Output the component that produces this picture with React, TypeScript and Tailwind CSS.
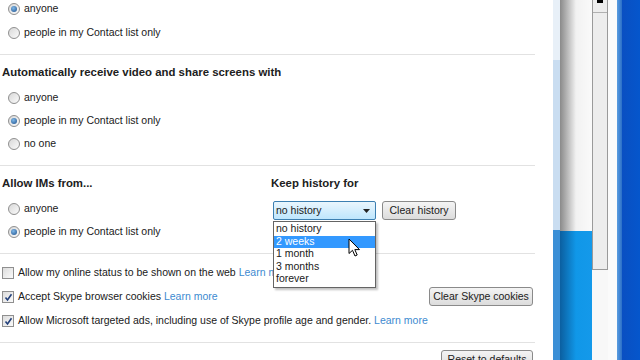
import React from 'react';

const font = { fontFamily: '"Liberation Sans", Arial, sans-serif' };

function Radio({ checked }: { checked?: boolean }) {
  return (
    <span className="relative inline-flex h-[12px] w-[12px] shrink-0 items-center justify-center rounded-full border border-[#8f8f8f] bg-gradient-to-br from-[#d8d8d8] to-[#fbfbfb]">
      {checked && <span className="h-[6px] w-[6px] rounded-full bg-[radial-gradient(circle_at_40%_35%,#7fb8e8,#1c4f8c)]" />}
    </span>
  );
}

function Check({ checked }: { checked?: boolean }) {
  return (
    <span className="inline-flex h-[12px] w-[12px] shrink-0 items-center justify-center border border-[#8f8f8f] bg-gradient-to-br from-[#dcdcdc] to-[#fafafa]">
      {checked && (
        <svg width="9" height="9" viewBox="0 0 9 9">
          <path d="M1.5 4.5 L3.5 7 L7.5 1.2" fill="none" stroke="#23407a" strokeWidth="1.6" />
        </svg>
      )}
    </span>
  );
}

function RadioRow({ label, checked }: { label: string; checked?: boolean }) {
  return (
    <div className="flex h-[18px] items-center gap-[4px] pl-[8px]">
      <Radio checked={checked} />
      <span>{label}</span>
    </div>
  );
}

function Btn({ children, className = '' }: { children: React.ReactNode; className?: string }) {
  return (
    <div className={`flex h-[19px] shrink-0 items-center justify-center whitespace-nowrap rounded-[3px] border border-[#8a8a8a] bg-gradient-to-b from-[#f4f4f4] to-[#dcdcdc] ${className}`}>
      {children}
    </div>
  );
}

function Divider() {
  return <div className="h-px w-[535px] bg-[#e2e2e2]" />;
}

const Link = ({ children }: { children: React.ReactNode }) => <span className="text-[#3d8ad0]">{children}</span>;

export default function App() {
  return (
    <div className="flex h-[360px] w-[640px] overflow-hidden bg-white text-[10.5px] text-[#202020]" style={font}>
      {/* settings panel */}
      <div className="w-[553px] shrink-0">
        <div className="flex h-[54px] flex-col gap-[6px]">
          <RadioRow label="anyone" checked />
          <RadioRow label="people in my Contact list only" />
        </div>
        <Divider />
        <div className="flex h-[110px] flex-col">
          <div className="mt-[10px] flex h-[16px] items-center pl-[2px] text-[11.4px] font-bold">Automatically receive video and share screens with</div>
          <div className="mt-[8px] flex flex-col gap-[5px]">
            <RadioRow label="anyone" />
            <RadioRow label="people in my Contact list only" checked />
            <RadioRow label="no one" />
          </div>
        </div>
        <Divider />
        <div className="flex h-[87px]">
          <div className="w-[271px]">
            <div className="mt-[10px] flex h-[16px] items-center pl-[2px] text-[11.4px] font-bold">Allow IMs from...</div>
            <div className="mt-[8px] flex flex-col gap-[5px]">
              <RadioRow label="anyone" />
              <RadioRow label="people in my Contact list only" checked />
            </div>
          </div>
          <div>
            <div className="mt-[10px] flex h-[16px] items-center text-[11.4px] font-bold">Keep history for</div>
            <div className="mt-[9px] flex items-center gap-[6px] pl-[2px]">
              <div className="relative">
                <div className="flex h-[19px] w-[103px] items-center justify-between rounded-[2px] border border-[#3c7fb1] bg-gradient-to-b from-[#eaf6fd] to-[#bee6fd] pl-[2px] pr-[5px]">
                  <span>no history</span>
                  <svg width="7" height="4" viewBox="0 0 7 4"><path d="M0 0 H7 L3.5 4 Z" fill="#222" /></svg>
                </div>
                <div className="absolute left-0 top-[20px] z-10 flex w-[103px] flex-col border border-[#646464] bg-white py-[1px] shadow-[2px_2px_2px_rgba(0,0,0,0.25)]">
                  {['no history', '2 weeks', '1 month', '3 months', 'forever'].map((o) => (
                    <div key={o} className={`flex h-[12.5px] items-center pl-[2px] ${o === '2 weeks' ? 'bg-[#3399ff] text-white' : ''}`}>{o}</div>
                  ))}
                </div>
              </div>
              <Btn className="w-[74px]">Clear history</Btn>
            </div>
          </div>
        </div>
        <Divider />
        <div className="flex h-[88px] flex-col pl-[2px]">
          <div className="mt-[11px] flex h-[16px] items-center gap-[4px]">
            <Check />
            <span>Allow my online status to be shown on the web <Link>Learn more</Link></span>
          </div>
          <div className="mt-[8px] flex h-[16px] items-center gap-[4px]">
            <Check checked />
            <span>Accept Skype browser cookies <Link>Learn more</Link></span>
            <Btn className="ml-auto mr-[20px] -mt-[1px] w-[104px]">Clear Skype cookies</Btn>
          </div>
          <div className="mt-[8px] flex h-[16px] items-center gap-[4px]">
            <Check checked />
            <span>Allow Microsoft targeted ads, including use of Skype profile age and gender. <Link>Learn more</Link></span>
          </div>
        </div>
        <Divider />
        <div className="flex w-[535px] justify-end pr-[2px] pt-[7px]">
          <Btn className="w-[92px]">Reset to defaults</Btn>
        </div>
      </div>

      {/* window edge / scrollbar / desktop strips */}
      <div className="flex w-[7px] flex-col">
        <div className="h-[60px] bg-[#e8f0f8]" />
        <div className="h-[170px] bg-[#c9ddf1]" />
        <div className="flex-1 bg-[#3b8fd6]" />
      </div>
      <div className="flex w-[32px] flex-col">
        <div className="h-[231px] bg-gradient-to-r from-[#8a8a8a] via-[#f2f2f2] to-[#fafafa]" />
        <div className="flex-1 bg-gradient-to-r from-[#0b5fa0] via-[#1097e8] to-[#1499ea]" />
      </div>
      <div className="flex w-[16px] flex-col bg-[#f8f8f8]">
        <div className="relative h-[270px] border-x border-b border-[#9a9a9a] bg-[#ededed]">
          <div className="absolute left-[4px] top-0 h-[3px] w-[6px] bg-black" />
          <div className="absolute left-0 right-0 top-[12px] h-px bg-[#b0b0b0]" />
        </div>
      </div>
      <div className="w-[9px] bg-[#fbfbfb]" />
      <div className="w-[5px] bg-gradient-to-r from-[#5b9ee0] to-[#2b6fc8]" />
      <div className="flex-1 bg-gradient-to-r from-[#0a4fc2] to-[#0556cc]" />

      {/* mouse pointer */}
      <svg className="absolute left-[348px] top-[238px] z-20" width="13" height="20" viewBox="0 0 13 20">
        <path d="M1 1 L1 15.5 L4.5 12.3 L7 18 L9.2 17 L6.8 11.6 L11.5 11.6 Z" fill="white" stroke="black" strokeWidth="1" strokeLinejoin="round" />
      </svg>
    </div>
  );
}
